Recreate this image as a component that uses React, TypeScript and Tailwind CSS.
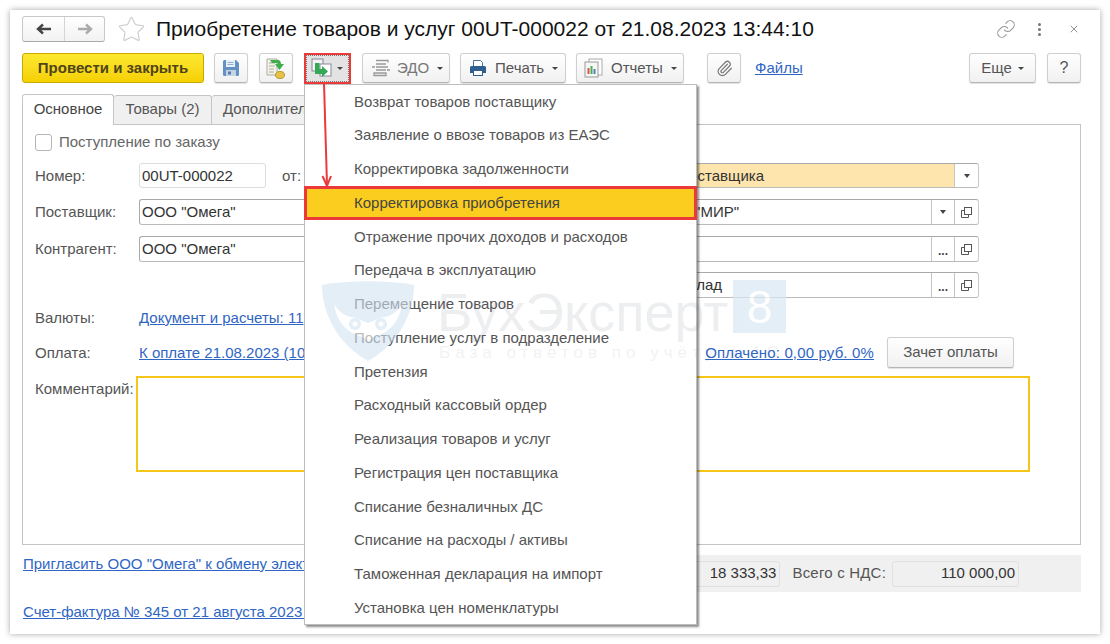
import { Link as LinkIcon, Paperclip, Star, X } from 'lucide-react'
import type { ReactNode } from 'react'

const menuItems = [
  'Возврат товаров поставщику',
  'Заявление о ввозе товаров из ЕАЭС',
  'Корректировка задолженности',
  'Корректировка приобретения',
  'Отражение прочих доходов и расходов',
  'Передача в эксплуатацию',
  'Перемещение товаров',
  'Поступление услуг в подразделение',
  'Претензия',
  'Расходный кассовый ордер',
  'Реализация товаров и услуг',
  'Регистрация цен поставщика',
  'Списание безналичных ДС',
  'Списание на расходы / активы',
  'Таможенная декларация на импорт',
  'Установка цен номенклатуры',
]

function Caret() {
  return <span className="block h-0 w-0 shrink-0 border-x-[3px] border-t-[3px] border-x-transparent border-t-[#444]" />
}

function Btn({ className, children }: { className: string; children: ReactNode }) {
  return (
    <div className={`flex shrink-0 items-center rounded-[3px] border border-[#cfcfcf] border-b-[#b5b5b5] bg-gradient-to-b from-white to-[#f1f1f1] text-[#555] shadow-[0_1px_1px_rgba(0,0,0,0.12)] ${className}`}>
      {children}
    </div>
  )
}

function CopyBtn() {
  return (
    <div className="flex w-[24px] items-center justify-center border-l border-[#c4c4c4]">
      <svg width="13" height="13" viewBox="0 0 13 13" fill="none" stroke="#555" strokeWidth="1">
        <rect x="4.5" y="1.5" width="7" height="7" />
        <path d="M4.5 4.5h-3v7h7v-3" />
      </svg>
    </div>
  )
}

function Dots() {
  return <div className="flex w-[23px] items-center justify-center border-l border-[#c4c4c4] pt-1 text-[12px] font-bold leading-none text-[#444]">...</div>
}

function DownBtn({ width }: { width: string }) {
  return (
    <div className={`flex items-center justify-center border-l border-[#c4c4c4] bg-white ${width}`}>
      <span className="block h-0 w-0 border-x-[3.5px] border-t-[4px] border-x-transparent border-t-[#444]" />
    </div>
  )
}

function Label({ className, children }: { className?: string; children?: ReactNode }) {
  return <div className={`w-[104px] shrink-0 text-[#555] ${className ?? ''}`}>{children}</div>
}

function Input({ className, children }: { className: string; children?: ReactNode }) {
  return (
    <div className={`flex overflow-hidden rounded-[3px] border border-[#c9c9c9] border-l-[#aaa] border-t-[#aaa] border-b-[#bbb] text-[#333] ${className}`}>
      {children}
    </div>
  )
}

function Watermark() {
  return (
    <div className="pointer-events-none absolute left-[312px] top-[270px] z-30 h-[84px] w-[466px]">
      <svg className="absolute left-0 top-0 opacity-60" width="92" height="82" viewBox="0 0 92 82">
        <path d="M0 5 C30 0 62 0 92 5 C92 34 76 64 46 81 C16 64 0 34 0 5Z" fill="#d3e3f2" />
        <path d="M12 24 C18 34 26 37 34 38 L46 43 L58 38 C66 37 74 34 80 24 C78 36 74 44 66 50 C60 56 52 54 46 62 C40 54 32 56 26 50 C18 44 14 36 12 24Z" fill="#fff" />
        <circle cx="33" cy="44" r="6" fill="#d3e3f2" />
        <circle cx="59" cy="44" r="6" fill="#d3e3f2" />
        <circle cx="33" cy="44" r="2.500" fill="#fff" />
        <circle cx="59" cy="44" r="2.500" fill="#fff" />
      </svg>
      <div className="absolute left-[115px] top-[2px] text-[54px] leading-[60px] text-[#5a6478] opacity-[0.1]">БухЭксперт</div>
      <div className="absolute left-[117px] top-[63px] whitespace-nowrap text-[17px] leading-5 tracking-[5px] text-[#5a6478] opacity-[0.08]">База ответов по учёту в 1С</div>
      <div className="absolute left-[411px] top-0 flex h-[53px] w-[53px] items-center justify-center bg-[#d9e8f4] text-[46px] leading-none text-white opacity-70">8</div>
    </div>
  )
}

export default function App() {
  return (
    <div className="h-[644px] w-[1110px] overflow-hidden bg-white p-[10px] font-['Liberation_Sans',Arial,sans-serif] text-[15px]">
      <div className="relative h-[624px] w-[1090px] bg-white pl-3 pr-[19px] pt-[6px] shadow-[0_0_6px_rgba(0,0,0,0.35)]">
        {/* заголовок */}
        <div className="flex h-[26px] items-center">
          <div className="flex h-[26px] w-[83px] rounded-[3px] border border-[#c8c8c8] border-b-[#aaa] bg-gradient-to-b from-white to-[#f2f2f2]">
            <div className="flex w-[42px] items-center justify-center border-r border-[#d5d5d5]">
              <svg width="16" height="12" viewBox="0 0 16 12" fill="none" stroke="#444" strokeWidth="2.4">
                <path d="M15 6H3M7 1.5 2 6l5 4.5" />
              </svg>
            </div>
            <div className="flex flex-1 items-center justify-center">
              <svg width="16" height="12" viewBox="0 0 16 12" fill="none" stroke="#aaa" strokeWidth="2.4">
                <path d="M1 6h12M9 1.5 14 6l-5 4.5" />
              </svg>
            </div>
          </div>
          <Star className="ml-[12px] h-[29px] w-[29px] text-[#cfcfcf]" strokeWidth={1} />
          <div className="ml-[10px] whitespace-nowrap text-[21px] leading-[26px] text-[#111]">Приобретение товаров и услуг 00UT-000022 от 21.08.2023 13:44:10</div>
          <div className="ml-auto flex items-center text-[#999]">
            <LinkIcon className="h-[20px] w-[20px]" strokeWidth={1.3} />
            <div className="ml-[22px] flex flex-col gap-[2px]">
              <span className="h-[3px] w-[3px] rounded-full bg-[#777]" />
              <span className="h-[3px] w-[3px] rounded-full bg-[#777]" />
              <span className="h-[3px] w-[3px] rounded-full bg-[#777]" />
            </div>
            <X className="ml-[27px] mr-[1px] h-[12px] w-[12px] text-[#777]" strokeWidth={1.6} />
          </div>
        </div>

        {/* панель кнопок */}
        <div className="mt-[11px] flex h-[30px] items-center">
          <div className="flex h-[30px] w-[182px] items-center justify-center rounded-[3px] border border-[#c9a800] bg-gradient-to-b from-[#fde92e] to-[#f5d000] font-bold text-[#4f4418]">Провести и закрыть</div>
          <Btn className="ml-[10px] h-[30px] w-[34px] justify-center">
            <svg width="18" height="18" viewBox="0 0 18 18">
              <path d="M1 2.500A1.500 1.500 0 0 1 2.500 1H14l3 3v11.500a1.500 1.500 0 0 1-1.500 1.500h-13A1.500 1.500 0 0 1 1 15.500Z" fill="#6590c4" />
              <rect x="4" y="1" width="9" height="7" fill="#e8f0f8" />
              <path d="M5.500 3.500h6M5.500 5.500h6" stroke="#8fb0d4" />
              <rect x="4" y="11" width="10" height="6" fill="#c4d4e4" />
              <rect x="6" y="12.500" width="3" height="3" fill="#5a7ca8" />
            </svg>
          </Btn>
          <Btn className="ml-[11px] h-[30px] w-[34px] justify-center">
            <svg width="22" height="22" viewBox="0 0 22 22">
              <path d="M2 2h10v16H2Z" fill="#f6f3e6" stroke="#aaa" />
              <path d="M4 6h6M4 9h6M4 12h5M4 15h5" stroke="#aaa" />
              <ellipse cx="15" cy="18" rx="4.500" ry="3.500" fill="#e5c24a" stroke="#b89a2c" />
              <path d="M5 3h8c2 0 3 2 3 4h3l-4.500 6L10 7h3c0-1-1-1-2-1H7Z" fill="#3fae49" />
            </svg>
          </Btn>
          <div className="ml-[11px] flex h-[31px] w-[47px] shrink-0 items-center gap-[5px] border-[2px] border-[#ea3a3a] bg-[#e3e3e3] pl-[5px] outline-1 -outline-offset-3 outline-dotted outline-[#777]">
            <svg width="21" height="20" viewBox="0 0 21 20">
              <rect x="1" y="1" width="11" height="12" fill="#f3f3f3" stroke="#889" />
              <rect x="9" y="6" width="11" height="12" fill="#fff" stroke="#889" />
              <path d="M4 5h4.500v6H11V8l6 5.500L11 19v-3H4Z" fill="#34a853" />
            </svg>
            <Caret />
          </div>
          <Btn className="ml-[11px] h-[30px] w-[88px] pl-[8px]">
            <svg width="20" height="18" viewBox="0 0 20 18" fill="none" stroke="#999" strokeWidth="1.300">
              <path d="M5 1.500h12v2M5 5h10M5 8h12M5 11h10M3 14h12v2.500H3Z" />
              <path d="M1 8h3M16 11h3" />
            </svg>
            <span className="ml-[6px] text-[#777]">ЭДО</span>
            <span className="ml-[8px] flex"><Caret /></span>
          </Btn>
          <Btn className="ml-[10px] h-[30px] w-[106px] pl-[8px]">
            <svg width="18" height="18" viewBox="0 0 18 18">
              <path d="M4.500 1.500h7l2 2v4h-9Z" fill="#fff" stroke="#4a6f98" />
              <path d="M2.500 7h13a1.500 1.500 0 0 1 1.500 1.500V14h-3v-3H4v3H1V8.500A1.500 1.500 0 0 1 2.500 7Z" fill="#2f5f8f" />
              <rect x="4.500" y="11.500" width="9" height="5" fill="#fff" stroke="#2f5f8f" />
            </svg>
            <span className="ml-[8px]">Печать</span>
            <span className="ml-[8px] flex"><Caret /></span>
          </Btn>
          <Btn className="ml-[10px] h-[30px] w-[108px] pl-[7px]">
            <svg width="19" height="20" viewBox="0 0 19 20">
              <rect x="5" y="1" width="13" height="16" fill="#fff" stroke="#aaa" />
              <rect x="1" y="4" width="13" height="15" fill="#f6f6f6" stroke="#999" />
              <rect x="3.500" y="10" width="2" height="6" fill="#d9534f" />
              <rect x="6.500" y="8" width="2" height="8" fill="#4caf50" />
              <rect x="9.500" y="11" width="2" height="5" fill="#4a7fc0" />
            </svg>
            <span className="ml-[8px]">Отчеты</span>
            <span className="ml-[8px] flex"><Caret /></span>
          </Btn>
          <Btn className="ml-[23px] h-[30px] w-[34px] justify-center">
            <Paperclip className="h-[17px] w-[17px] text-[#777]" strokeWidth={1.7} />
          </Btn>
          <a className="ml-[14px] text-[#2f66c4] underline">Файлы</a>
          <Btn className="ml-auto h-[30px] w-[67px] justify-center gap-[6px]">
            <span>Еще</span>
            <Caret />
          </Btn>
          <Btn className="ml-[11px] h-[30px] w-[34px] justify-center text-[16px] text-[#222]">?</Btn>
        </div>

        {/* вкладки */}
        <div className="mt-[11px] flex h-[31px] items-end">
          <div className="relative z-10 flex h-[31px] w-[92px] items-center justify-center rounded-t-[3px] border border-b-0 border-[#c4c4c4] bg-white pb-[2px] text-[#444]">Основное</div>
          <div className="flex h-[30px] w-[98px] items-center justify-center rounded-t-[3px] border border-l-0 border-[#c4c4c4] bg-[#f0f0f0] pb-[1px] text-[#555]">Товары (2)</div>
          <div className="flex h-[30px] w-[130px] items-center rounded-t-[3px] border border-l-0 border-[#c4c4c4] bg-[#f0f0f0] pb-[1px] pl-[11px] text-[#555]">Дополнительно</div>
        </div>

        {/* форма */}
        <div className="-mt-px h-[421px] border border-[#c4c4c4] pl-3 pt-[8px]">
          <div className="flex h-[18px] items-center">
            <span className="h-[17px] w-[17px] rounded-[3px] border border-[#b5b5b5] bg-white" />
            <span className="ml-[7px] text-[#666]">Поступление по заказу</span>
          </div>
          <div className="mt-[12px] flex items-center">
            <Label className="pt-px">Номер:</Label>
            <Input className="h-[25px] w-[127px] items-center border-[#ddd] border-b-[#ddd] border-l-[#ddd] border-t-[#ddd] pl-[2px] pt-px">00UT-000022</Input>
            <span className="ml-[16px] pt-px text-[#555]">от:</span>
            <Input className="ml-auto mr-[101px] h-[25px] w-[400px] bg-[#fde5ad]">
              <div className="flex flex-1 items-center justify-end whitespace-nowrap pr-[190px] pt-px">Покупка у поставщика</div>
              <DownBtn width="w-[24px]" />
            </Input>
          </div>
          <div className="mt-[11px] flex items-center">
            <Label>Поставщик:</Label>
            <Input className="h-[26px] w-[200px] items-center pl-[2px]">ООО "Омега"</Input>
            <Input className="ml-auto mr-[101px] h-[26px] w-[400px]">
              <div className="flex flex-1 items-center justify-end pr-[192px]">ООО "МИР"</div>
              <DownBtn width="w-[23px]" />
              <CopyBtn />
            </Input>
          </div>
          <div className="mt-[11px] flex items-center">
            <Label>Контрагент:</Label>
            <Input className="h-[26px] w-[200px] items-center pl-[2px]">ООО "Омега"</Input>
            <Input className="ml-auto mr-[101px] h-[26px] w-[400px]">
              <div className="flex-1" />
              <Dots />
              <CopyBtn />
            </Input>
          </div>
          <div className="mt-[10px] flex items-center">
            <Label />
            <Input className="ml-auto mr-[101px] h-[26px] w-[400px]">
              <div className="flex flex-1 items-center justify-end pr-[209px]">Основной склад</div>
              <Dots />
              <CopyBtn />
            </Input>
          </div>
          <div className="mt-[10px] flex h-[20px] items-center">
            <Label>Валюты:</Label>
            <a className="text-[#2f66c4] underline">Документ и расчеты: 11</a>
          </div>
          <div className="mt-[9px] flex h-[31px] items-center">
            <Label className="pt-[2px]">Оплата:</Label>
            <a className="pt-[2px] text-[#2f66c4] underline">К оплате 21.08.2023 (10</a>
            <a className="ml-auto whitespace-nowrap pt-[2px] tracking-[0.15px] text-[#2f66c4] underline">Оплачено: 0,00 руб. 0%</a>
            <Btn className="ml-[13px] mr-[66px] h-[31px] w-[127px] justify-center text-[#444]">Зачет оплаты</Btn>
          </div>
          <div className="mt-[8px] flex">
            <div className="w-[101px] shrink-0 pt-[2px] text-[#555]">Комментарий:</div>
            <div className="h-[96px] w-[894px] border-2 border-[#f5c61a] bg-white" />
          </div>
        </div>

        {/* подвал */}
        <div className="mt-[10px] flex h-[37px]">
          <a className="w-[400px] shrink-0 whitespace-nowrap pl-px leading-[18px] text-[#2f66c4] underline">Пригласить ООО "Омега" к обмену электронными</a>
          <div className="flex flex-1 items-center bg-[#f0f0f0]">
            <div className="ml-auto flex h-[26px] w-[150px] items-center justify-end rounded-[3px] border border-[#e0e0e0] pr-[3px] text-[#333]">18 333,33</div>
            <span className="ml-[12px] tracking-[0.2px] text-[#555]">Всего с НДС:</span>
            <div className="ml-[6px] mr-[62px] flex h-[26px] w-[127px] items-center justify-end rounded-[3px] border border-[#e0e0e0] pr-[3px] text-[#333]">110 000,00</div>
          </div>
        </div>
        <a className="mt-[9px] block whitespace-nowrap pl-px text-[#2f66c4] underline">Счет-фактура № 345 от 21 августа 2023 г.</a>

        {/* выпадающее меню */}
        <div className="absolute left-[294px] top-[74px] z-20 h-[541px] w-[393px] border border-[#bdbdbd] bg-white shadow-[2px_2px_2px_rgba(0,0,0,0.45)]">
          {menuItems.map((item) => (
            <div
              key={item}
              className={
                item === 'Корректировка приобретения'
                  ? 'relative -ml-px -mr-px flex h-[33.750px] items-center border-[3px] border-[#ea3a3a] bg-[#fbcd1e] pl-[47px] text-[#444]'
                  : 'flex h-[33.750px] items-center pl-[49px] text-[#555]'
              }
            >
              {item}
            </div>
          ))}
        </div>

        {/* красная стрелка */}
        <svg className="pointer-events-none absolute left-[305px] top-[72px] z-40" width="24" height="106" viewBox="0 0 24 106" fill="none">
          <path d="M9 1 L12 103" stroke="#ea3a3a" strokeWidth="2" />
          <path d="M7.500 94 L12 104 L16 94" stroke="#ea3a3a" strokeWidth="2" />
        </svg>

        <Watermark />
      </div>
    </div>
  )
}
